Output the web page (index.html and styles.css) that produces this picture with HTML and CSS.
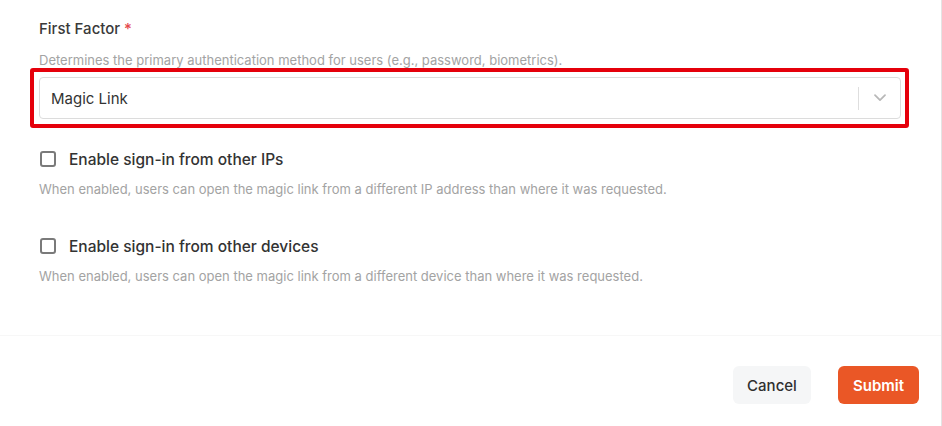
FILE: index.html
```html
<!DOCTYPE html>
<html lang="en">
<head>
<meta charset="utf-8">
<title>First Factor</title>
<link rel="stylesheet" href="styles.css">
</head>
<body>
<div class="page">
  <div class="form">
    <div class="field-label">First Factor <span class="req">*</span></div>
    <div class="field-desc">Determines the primary authentication method for users (e.g., password, biometrics).</div>
    <div class="highlight">
      <div class="select">
        <span class="select-value">Magic Link</span>
        <span class="select-divider"></span>
        <span class="select-arrow">
          <svg width="12" height="8" viewBox="0 0 12 8"><path d="M1 1.2 L6 6.2 L11 1.2" fill="none" stroke="#b8b8b8" stroke-width="1.7" stroke-linecap="round" stroke-linejoin="round"/></svg>
        </span>
      </div>
    </div>
    <div class="check-row first">
      <span class="checkbox"></span>
      <span class="check-label">Enable sign-in from other IPs</span>
    </div>
    <div class="check-desc">When enabled, users can open the magic link from a different IP address than where it was requested.</div>
    <div class="check-row second">
      <span class="checkbox"></span>
      <span class="check-label">Enable sign-in from other devices</span>
    </div>
    <div class="check-desc">When enabled, users can open the magic link from a different device than where it was requested.</div>
  </div>
  <div class="footer">
    <button class="btn btn-cancel">Cancel</button>
    <button class="btn btn-submit">Submit</button>
  </div>
</div>
</body>
</html>
```
FILE: styles.css
```css
html, body {
  margin: 0;
  padding: 0;
  background: #ffffff;
}
body {
  font-family: "Inter", "Noto Sans", sans-serif;
  color: #333333;
}
.page {
  width: 942px;
  height: 426px;
  border-right: 1px solid #e4e4e4;
  box-sizing: border-box;
  overflow: hidden;
}
.form {
  padding: 19px 40px 0 39px;
}
.field-label {
  font-size: 15px;
  line-height: 20px;
  font-weight: 500;
  color: #3a3a3a;
}
.req {
  color: #e5484d;
}
.field-desc {
  margin-top: 13px;
  font-size: 13px;
  line-height: 16px;
  color: #a3a3a3;
}
.highlight {
  margin: 0 -8px 0 -9px;
  border: 4px solid #e5000b;
  border-radius: 3px;
  padding: 5px 4px 5px 5px;
}
.select {
  height: 42px;
  box-sizing: border-box;
  border: 1px solid #dcdcdc;
  border-radius: 4px;
  display: flex;
  align-items: center;
  padding-left: 11px;
  background: #ffffff;
}
.select-value {
  flex: 1;
  font-size: 15px;
  color: #333333;
}
.select-divider {
  width: 1px;
  height: 23px;
  background: #dedede;
}
.select-arrow {
  width: 41px;
  display: flex;
  justify-content: center;
  align-items: center;
}
.check-row {
  display: flex;
  align-items: center;
  height: 20px;
  gap: 13px;
  padding-left: 1px;
}
.check-row.first {
  margin-top: 21px;
}
.check-row.second {
  margin-top: 39px;
}
.checkbox {
  width: 16px;
  height: 16px;
  box-sizing: border-box;
  border: 2px solid #7a7a7a;
  border-radius: 3px;
}
.check-label {
  font-size: 15.5px;
  font-weight: 500;
  color: #333333;
}
.check-desc {
  margin-top: 12px;
  font-size: 13px;
  line-height: 16px;
  color: #a3a3a3;
}
.footer {
  margin-top: 51px;
  border-top: 1px solid #f7f7f7;
  padding: 30px 22px 0 0;
  display: flex;
  justify-content: flex-end;
  gap: 27px;
}
.btn {
  height: 38px;
  border: none;
  border-radius: 6px;
  font-family: "Inter", "Noto Sans", sans-serif;
  font-size: 15px;
  cursor: pointer;
}
.btn-cancel {
  width: 78px;
  background: #f5f6f7;
  color: #2f2f2f;
  font-weight: 500;
}
.btn-submit {
  width: 81px;
  background: #ea5726;
  color: #ffffff;
  font-weight: 600;
}
```
